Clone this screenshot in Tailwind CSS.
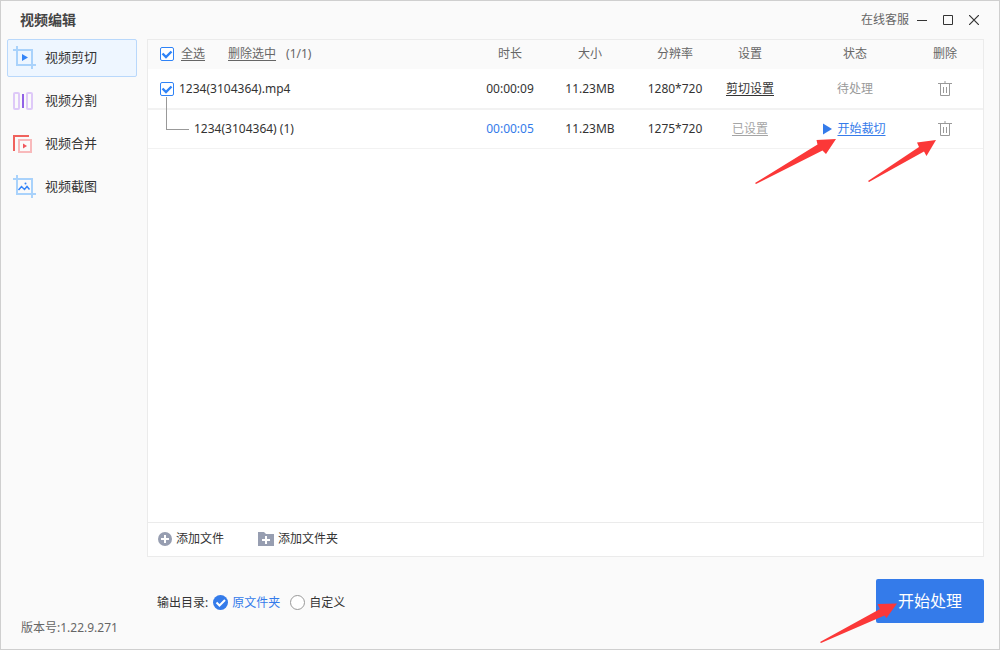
<!DOCTYPE html>
<html lang="zh-CN">
<head>
<meta charset="utf-8">
<meta name="viewport" content="width=device-width, initial-scale=1">
<title>视频编辑</title>
<script src="https://cdn.jsdelivr.net/npm/@tailwindcss/browser@4"></script>
</head>
<body class="relative flex min-h-screen flex-col border border-[#cfcfcf] bg-[#fafafa] font-['Noto_Sans','Noto_Sans_CJK_SC',sans-serif] text-xs text-[#333]">
<header class="flex h-[38px] items-center justify-between pr-[20px] pl-[19px]">
  <h1 class="text-sm font-bold text-[#444]">视频编辑</h1>
  <div class="flex items-center text-[#333]">
    <a href="#" class="mr-2 text-[#666]">在线客服</a>
    <button type="button" aria-label="最小化" class="mr-4"><svg class="block" width="10" height="10" stroke="currentColor"><path d="M0 5.5H10"/></svg></button>
    <button type="button" aria-label="最大化" class="mr-4"><svg class="block" width="10" height="10" fill="none" stroke="currentColor"><path d="M.5 .5H9.5V9.5H.5Z"/></svg></button>
    <button type="button" aria-label="关闭"><svg class="block" width="10" height="10" fill="none" stroke="currentColor" stroke-width="1.2"><path d="M0 0L10 10M10 0L0 10"/></svg></button>
  </div>
</header>
<div class="flex flex-1">
  <aside class="ml-[6px] flex w-[130px] flex-col justify-between">
    <nav class="flex flex-col gap-[5px] text-[13px]">
      <a href="#" class="flex h-[38px] items-center gap-2 rounded-[2px] border border-[#b9d8fb] bg-[#eef6ff] pl-[5px]">
        <svg width="24" height="24" viewBox="0 0 24 24" fill="none"><path d="M0 4H19V23M4 0V19H23" stroke="#a9d2fb" stroke-width="2"/><path d="M9 8V15L15 11.5Z" fill="#3585f8"/></svg>视频剪切</a>
      <a href="#" class="flex h-[38px] items-center gap-2 border border-transparent pl-[5px]">
        <svg width="24" height="24" viewBox="0 0 24 24" fill="none"><rect x="1" y="4" width="5" height="16" rx="1" stroke="#dec9f8" stroke-width="2"/><rect x="14" y="4" width="5" height="16" rx="1" stroke="#dec9f8" stroke-width="2"/><path d="M10 5V19" stroke="#9161e6" stroke-width="2"/></svg>视频分割</a>
      <a href="#" class="flex h-[38px] items-center gap-2 border border-transparent pl-[5px]">
        <svg width="24" height="24" viewBox="0 0 24 24" fill="none"><path d="M1 19V4H16" stroke="#f0625d" stroke-width="2"/><rect x="6" y="8" width="12" height="12" stroke="#f8b9bb" stroke-width="2"/><path d="M10 11.5V16.5L14 14Z" fill="#f0565c"/></svg>视频合并</a>
      <a href="#" class="flex h-[38px] items-center gap-2 border border-transparent pl-[5px]">
        <svg width="24" height="24" viewBox="0 0 24 24" fill="none"><path d="M0 4H19V23M4 0V19H23" stroke="#a9d2fb" stroke-width="2"/><path d="M5.500 15L8.500 11.500L11.500 14.500L14 11.500L16.500 14.500" stroke="#3585f8" stroke-width="1.500"/><circle cx="12.500" cy="8.500" r="1" fill="#3585f8"/></svg>视频截图</a>
    </nav>
    <p class="mb-[13px] ml-[14px] text-[#666]">版本号:1.22.9.271</p>
  </aside>
  <main class="mr-[15px] ml-[10px] flex flex-1 flex-col">
    <section class="flex flex-1 flex-col border border-[#ebebeb] bg-white">
      <table class="w-full table-fixed border-separate border-spacing-0 text-center">
        <colgroup><col><col class="w-[60px]"><col class="w-[100px]"><col class="w-[70px]"><col class="w-[80px]"><col class="w-[130px]"><col class="w-[63px]"></colgroup>
        <thead class="bg-[#fafafa] text-[#666]">
          <tr class="h-[29px] *:p-0 *:pb-px *:font-normal">
            <th>
              <div class="ml-3 flex items-center">
                <label class="flex items-center gap-[7px]">
                  <span class="grid"><input type="checkbox" checked class="col-start-1 row-start-1 size-[14px] appearance-none rounded-[2px] border border-[#2f83f7] bg-white"><svg class="pointer-events-none col-start-1 row-start-1" width="14" height="14" fill="none" stroke="#2f83f7" stroke-width="2.4"><path d="M2.500 6.500L6 10L11.500 4.500"/></svg></span>
                  <span class="underline underline-offset-2">全选</span>
                </label>
                <button type="button" class="ml-[23px] underline underline-offset-2">删除选中</button>
                <span class="ml-[10px]">(1/1)</span>
              </div>
            </th>
            <th>时长</th><th>大小</th><th>分辨率</th><th>设置</th><th>状态</th><th><span class="mr-[13px]">删除</span></th>
          </tr>
        </thead>
        <tbody>
          <tr class="h-[41px] *:border-b-2 *:border-[#f2f2f2] *:p-0">
            <td>
              <label class="ml-3 flex items-center gap-[5px]">
                <span class="grid"><input type="checkbox" checked class="col-start-1 row-start-1 size-[14px] appearance-none rounded-[2px] border border-[#2f83f7] bg-white"><svg class="pointer-events-none col-start-1 row-start-1" width="14" height="14" fill="none" stroke="#2f83f7" stroke-width="2.4"><path d="M2.500 6.500L6 10L11.500 4.500"/></svg></span>
                1234(3104364).mp4
              </label>
            </td>
            <td>00:00:09</td><td>11.23MB</td><td>1280*720</td>
            <td><button type="button" class="underline underline-offset-2">剪切设置</button></td>
            <td class="text-[#999]">待处理</td>
            <td><button type="button" aria-label="删除文件" class="mr-[13px] align-middle text-[#999]"><svg class="block" width="14" height="16" fill="none" stroke="currentColor"><path d="M0 2.5H14M7 0V2M2.5 3V14.5H11.5V3M5.5 6V12M8.5 6V12"/></svg></button></td>
          </tr>
          <tr class="h-[39px] *:border-b *:border-[#f2f2f2] *:p-0">
            <td class="relative text-left">
              <span class="absolute -top-[13px] left-[18px] h-[33px] w-[23px] border-b border-l border-[#999]"></span>
              <span class="ml-[46px]">1234(3104364) (1)</span>
            </td>
            <td class="text-[#347bea]">00:00:05</td><td>11.23MB</td><td>1275*720</td>
            <td><button type="button" class="text-[#a5a5a5] underline underline-offset-2">已设置</button></td>
            <td><button type="button" class="flex w-full items-center justify-center gap-[5px] pr-px text-[#347bea]"><svg width="9" height="12"><path d="M0 0.5V11.5L9 6Z" fill="currentColor"/></svg><span class="underline underline-offset-2">开始裁切</span></button></td>
            <td><button type="button" aria-label="删除片段" class="mr-[13px] align-middle text-[#999]"><svg class="block" width="14" height="16" fill="none" stroke="currentColor"><path d="M0 2.5H14M7 0V2M2.5 3V14.5H11.5V3M5.5 6V12M8.5 6V12"/></svg></button></td>
          </tr>
        </tbody>
      </table>
      <div class="mt-auto flex h-[34px] items-center gap-[34px] border-t border-[#ebebeb] pb-px pl-[10px]">
        <button type="button" class="flex items-center gap-1"><svg width="14" height="14"><circle cx="7" cy="7" r="7" fill="#979eb1"/><path d="M3 7H11M7 3V11" stroke="#fff" stroke-width="2"/></svg>添加文件</button>
        <button type="button" class="flex items-center gap-1"><svg width="16" height="14"><path d="M0 0H6L8 2H16V14H0Z" fill="#979eb1"/><path d="M4 8H12M8 4V12" stroke="#fff" stroke-width="2"/></svg>添加文件夹</button>
      </div>
    </section>
    <footer class="flex h-[92px] items-center justify-between pb-1 pl-[10px]">
      <fieldset class="flex items-center pt-[3px]">
        <legend class="float-left">输出目录:</legend>
        <label class="ml-[5px] flex items-center gap-1 text-[#347bea]">
          <span class="grid"><input type="radio" name="output" checked class="col-start-1 row-start-1 size-[15px] appearance-none rounded-full bg-[#347bea]"><svg class="pointer-events-none col-start-1 row-start-1" width="15" height="15" fill="none" stroke="#fff" stroke-width="2"><path d="M3.5 7.5L6.5 10.5L12 5"/></svg></span>原文件夹</label>
        <label class="ml-[10px] flex items-center gap-1"><input type="radio" name="output" class="size-[15px] appearance-none rounded-full border border-[#999] bg-white">自定义</label>
      </fieldset>
      <button type="button" class="h-[44px] w-[108px] rounded-[2px] bg-[#347bea] text-base text-white">开始处理</button>
    </footer>
  </main>
</div>
<svg class="pointer-events-none absolute top-[137px] right-[61px]" width="184" height="48" viewBox="754 138 184 48" fill="#fb3838" aria-hidden="true">
  <path d="M755 183L817.500 144.500L816.500 140L836 139L826 154L822.500 150.500L756 184Z"/>
  <path d="M868 181L919 147L917 142.500L936 140L926.500 156L924 151.500L869 182Z"/>
</svg>
<svg class="pointer-events-none absolute right-[99px] bottom-[5px]" width="80" height="42" viewBox="820 602 80 42" fill="#fb3838" aria-hidden="true">
  <path d="M820 642L880 609L877.500 604L897 603.500L886.500 618L884.500 615.500L821 643Z"/>
</svg>
</body>
</html>
